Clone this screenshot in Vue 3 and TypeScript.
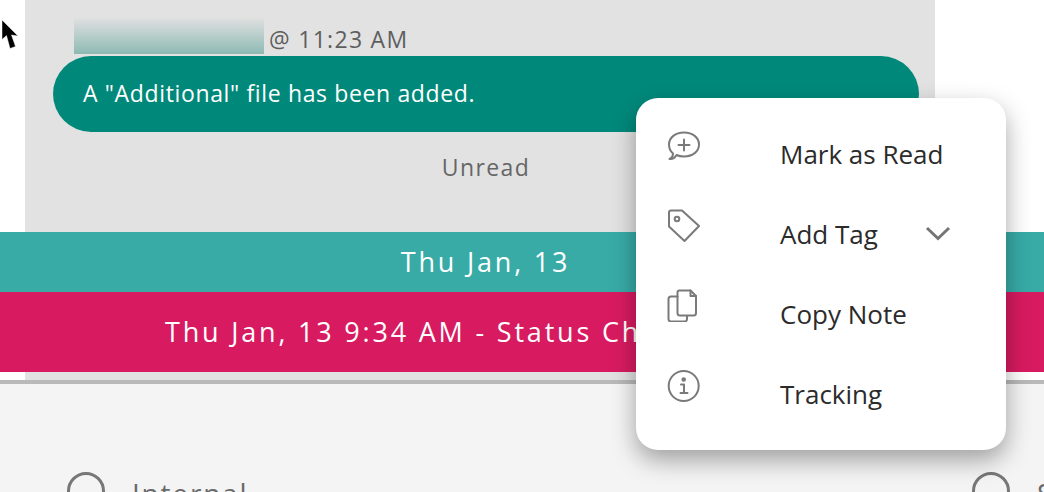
<template>
  <div class="page">
    <svg class="cursor" width="24" height="36" viewBox="0 0 24 36">
      <path d="M2 2 L2 21.500 L6.500 17.500 L10 30.500 L15.500 28.500 L11.500 17 L18 18 Z" fill="#000" stroke="#fff" stroke-opacity="0.6" stroke-width="0.800" />
    </svg>

    <section class="thread">
      <div class="note-head">
        <div class="blurred-name"></div>
        <span class="note-time">@ 11:23 AM</span>
      </div>
      <div class="bubble">A "Additional" file has been added.</div>
      <div class="note-status">Unread</div>
    </section>

    <div class="banner banner-date">Thu Jan, 13</div>
    <div class="banner banner-status">Thu Jan, 13 9:34 AM - Status Changed</div>
    <div class="thread-tail"></div>

    <section class="composer">
      <label class="radio" v-for="item in radios" :key="item">
        <span class="radio-dot"></span>
        <span class="radio-label">{{ item }}</span>
      </label>
    </section>

    <ul class="menu">
      <li class="menu-item" v-for="item in menuItems" :key="item.label">
        <span class="menu-icon">
          <svg width="34" height="34" viewBox="0 0 34 34" fill="none" stroke="#7a7a7a" stroke-width="2" stroke-linejoin="round" stroke-linecap="round">
            <template v-if="item.icon === 'comment'">
              <path d="M2.500 31 C4.500 30 6 28 6 25.500 C3.500 23.500 2 20.500 2 16.500 C2 9.500 8.500 4.500 17 4.500 C25.500 4.500 32 9.500 32 16.500 C32 23.500 25.500 28.500 17 28.500 C14 28.500 11.500 28 9.500 27 C8 29.500 5.500 31.500 2.500 31 Z" />
              <path d="M17 11.500 V22.500 M11.500 17 H22.500" />
            </template>
            <template v-else-if="item.icon === 'tag'">
              <path d="M2 4.500 C2 3 3 2.500 4 2.500 H15 L32 18 L17.500 33 L2 18.500 Z" />
              <circle cx="10" cy="11" r="2.300" />
            </template>
            <template v-else-if="item.icon === 'copy'">
              <path d="M10.500 8.500 H4 C2.500 8.500 1.500 9.500 1.500 11 V31 C1.500 32.500 2.500 33.500 4 33.500 H17.500 C19 33.500 20 32.500 20 31 V28" />
              <path d="M10.500 4.500 C10.500 3.500 11.500 2.500 12.500 2.500 H23.500 L29 8 V25 C29 26.500 28 27.500 26.500 27.500 H13 C11.500 27.500 10.500 26.500 10.500 25 Z" />
              <path d="M23.500 2.500 V8 H29" />
            </template>
            <template v-else>
              <circle cx="16.700" cy="18" r="15" />
              <circle cx="16.700" cy="11.500" r="1.300" fill="#7a7a7a" />
              <path d="M14 16.500 H17 V25 M13.500 25 H20.500" />
            </template>
          </svg>
        </span>
        <span class="menu-label">{{ item.label }}</span>
        <svg v-if="item.chevron" class="chevron" width="26" height="16" viewBox="0 0 26 16" fill="none" stroke="#757575" stroke-width="3">
          <path d="M2 3 L13 13.500 L24 3" />
        </svg>
      </li>
    </ul>
  </div>
</template>

<script setup lang="ts">
interface MenuItem {
  label: string
  icon: string
  chevron?: boolean
}

const radios = ['Internal', 'Shared']

const menuItems: MenuItem[] = [
  { label: 'Mark as Read', icon: 'comment' },
  { label: 'Add Tag', icon: 'tag', chevron: true },
  { label: 'Copy Note', icon: 'copy' },
  { label: 'Tracking', icon: 'info' },
]
</script>

<style>
html, body {
  margin: 0;
  background: #fff;
  overflow: hidden;
}
</style>

<style scoped>
.page {
  position: relative;
  width: 1044px;
  height: 492px;
  overflow: hidden;
  font-family: "Open Sans", "Noto Sans", sans-serif;
  background: #fff;
}

.cursor {
  position: absolute;
  top: 18px;
  left: 0;
}

.thread {
  box-sizing: border-box;
  height: 232px;
  margin: 0 109px 0 25px;
  padding: 18px 16px 0 28px;
  background: #e2e2e2;
}

.note-head {
  display: flex;
  align-items: flex-end;
  gap: 5px;
  height: 36px;
  margin-left: 21px;
}

.blurred-name {
  width: 190px;
  height: 36px;
  background: linear-gradient(#e0e0e0, #8dbab3);
}

.note-time {
  font-size: 23px;
  line-height: 30px;
  letter-spacing: 1.300px;
  color: #5e5e5e;
}

.bubble {
  box-sizing: border-box;
  height: 76px;
  margin-top: 2px;
  padding-left: 30px;
  border-radius: 38px;
  background: #00897b;
  color: #fff;
  font-size: 23px;
  line-height: 74px;
  letter-spacing: 0.640px;
}

.note-status {
  margin-top: 20px;
  text-align: center;
  font-size: 23px;
  line-height: 30px;
  letter-spacing: 1.400px;
  color: #666;
}

.banner {
  text-align: center;
  color: #fff;
  font-weight: 500;
  letter-spacing: 2.800px;
  font-size: 27px;
}

.banner-date {
  height: 60px;
  line-height: 60px;
  background: #38aba7;
  padding-right: 73px;
}

.banner-status {
  height: 80px;
  line-height: 80px;
  background: #d81b60;
  padding-right: 146px;
}

.thread-tail {
  height: 8px;
  margin: 0 109px 0 25px;
  background: #e2e2e2;
}

.composer {
  display: grid;
  grid-template-columns: 905px 1fr;
  height: 112px;
  box-sizing: border-box;
  padding: 88px 0 0 67px;
  border-top: 4px solid #b9b9b9;
  background: #f4f4f4;
}

.radio {
  display: flex;
  align-items: flex-start;
  gap: 27px;
}

.radio-dot {
  box-sizing: border-box;
  flex-shrink: 0;
  width: 38px;
  height: 38px;
  border: 3px solid #777;
  border-radius: 50%;
}

.radio-label {
  font-size: 28px;
  line-height: 42px;
  letter-spacing: 1.800px;
  color: #6a6a6a;
}

.menu {
  position: absolute;
  top: 98px;
  left: 636px;
  box-sizing: border-box;
  width: 370px;
  height: 352px;
  margin: 0;
  padding: 16px 0 16px;
  list-style: none;
  background: #fff;
  border-radius: 22px;
  box-shadow: 0 10px 24px rgba(0, 0, 0, 0.35);
}

.menu-item {
  display: flex;
  align-items: center;
  height: 80px;
  padding: 0 55px 0 31px;
}

.menu-icon {
  display: flex;
  width: 113px;
  height: 34px;
  margin-top: -18px;
}

.menu-label {
  flex: 1;
  font-size: 26px;
  color: #2b2b2b;
}

.chevron {
  margin-top: -3px;
}
</style>
